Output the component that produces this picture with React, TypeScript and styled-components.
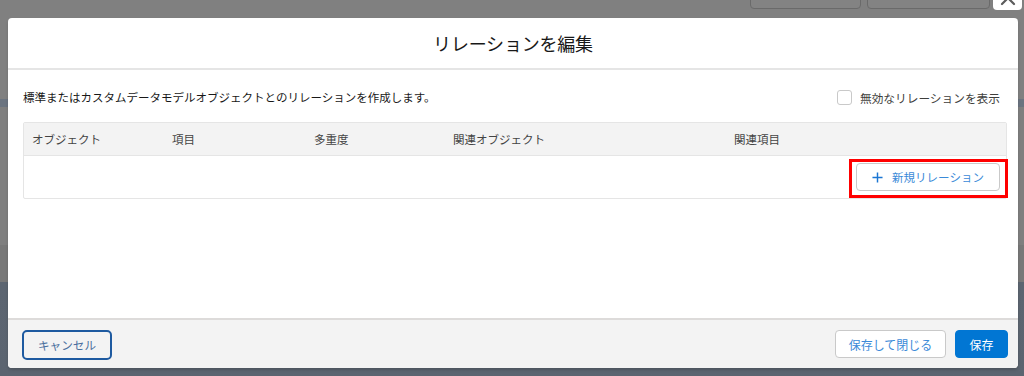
import styled, { createGlobalStyle } from "styled-components";

const GlobalStyle = createGlobalStyle`
  html, body {
    margin: 0;
    padding: 0;
  }
  body {
    font-family: "Noto Sans CJK JP", "Noto Sans", sans-serif;
    color: #181818;
  }
  * {
    box-sizing: border-box;
  }
`;

const Screen = styled.div`
  position: relative;
  width: 1024px;
  height: 376px;
  overflow: hidden;
  background: linear-gradient(
    to bottom,
    #808080 0px,
    #808080 99px,
    #6b7480 99px,
    #6b7480 107px,
    #7f7f7f 107px,
    #7f7f7f 245px,
    #787878 245px,
    #787878 282px,
    #5c6571 282px,
    #5b6470 100%
  );
`;

const BackToolbar = styled.div`
  display: flex;
  justify-content: flex-end;
  gap: 6px;
  padding-right: 34px;
  height: 9px;
`;

const BackButton = styled.div<{ $w: number }>`
  width: ${(p) => p.$w}px;
  height: 30px;
  margin-top: -21px;
  border: 1px solid #6a6a6a;
  border-radius: 4px;
  background: #838383;
`;

const Overlay = styled.div`
  position: absolute;
  inset: 0;
  padding: 18px 6px 8px 8px;
`;

const Modal = styled.div`
  position: relative;
  height: 350px;
  background: #ffffff;
  border-radius: 4px;
  box-shadow: 0 2px 3px rgba(0, 0, 0, 0.16);
  display: flex;
  flex-direction: column;
`;

const CloseButton = styled.button`
  position: absolute;
  top: -46px;
  right: -4px;
  width: 29px;
  height: 38px;
  border: none;
  border-radius: 4px;
  background: #ffffff;
  display: flex;
  align-items: flex-end;
  justify-content: center;
  padding: 0 0 4px;
  color: #5c5c5c;
`;

const Header = styled.div`
  height: 52px;
  border-bottom: 2px solid #e5e5e5;
  border-radius: 4px 4px 0 0;
  display: flex;
  align-items: center;
  justify-content: center;
`;

const Title = styled.h2`
  margin: 0;
  font-size: 18px;
  font-weight: 400;
  color: #181818;
  letter-spacing: -0.2px;
`;

const Body = styled.div`
  flex: 1;
  padding: 17px 11px 0 15px;
  display: flex;
  flex-direction: column;
  gap: 15px;
`;

const TopRow = styled.div`
  height: 20px;
  display: flex;
  align-items: center;
  justify-content: space-between;
  padding-right: 7px;
`;

const Description = styled.p`
  margin: 0;
  font-size: 11.5px;
  color: #181818;
`;

const CheckLabel = styled.label`
  display: flex;
  align-items: center;
  gap: 8px;
  font-size: 11.7px;
  color: #3e3e3c;
`;

const CheckBox = styled.span`
  width: 15px;
  height: 15px;
  border: 1px solid #c9c9c9;
  border-radius: 3px;
  background: #ffffff;
`;

const Table = styled.div`
  border: 1px solid #e5e5e5;
  border-radius: 2px;
`;

const HeadRow = styled.div`
  height: 33px;
  background: #f3f3f3;
  border-bottom: 1px solid #e5e5e5;
  display: grid;
  grid-template-columns: 140px 142px 139px 281px 1fr;
  align-items: center;
  padding-left: 8px;
`;

const HeadCell = styled.div`
  font-size: 11.5px;
  color: #444444;
`;

const ActionRow = styled.div`
  height: 42px;
  display: flex;
  align-items: center;
  justify-content: flex-end;
  padding-right: 6px;
`;

const Highlight = styled.div`
  position: relative;
  &::after {
    content: "";
    position: absolute;
    top: -4px;
    bottom: -7px;
    left: -7px;
    right: -8px;
    border: 3px solid #ff0000;
    pointer-events: none;
  }
`;

const NeutralButton = styled.button<{ $w: number }>`
  width: ${(p) => p.$w}px;
  height: 28px;
  padding: 0;
  border: 1px solid #c9c9c9;
  border-radius: 4px;
  background: #ffffff;
  color: #3b8ad8;
  font-family: inherit;
  font-size: 11.5px;
  white-space: nowrap;
  display: flex;
  align-items: center;
  justify-content: center;
  gap: 9px;
`;

const Footer = styled.div`
  height: 50px;
  border-top: 2px solid #dddbda;
  background: #f3f3f3;
  border-radius: 0 0 4px 4px;
  display: flex;
  align-items: center;
  justify-content: space-between;
  padding: 0 10px 0 14px;
`;

const CancelButton = styled.button`
  width: 90px;
  height: 30px;
  margin-top: 1px;
  border: 2px solid #1e5aa0;
  border-radius: 5px;
  background: #f3f3f3;
  color: #4a6f9e;
  font-family: inherit;
  font-size: 11.6px;
`;

const ButtonGroup = styled.div`
  display: flex;
  align-items: center;
  gap: 9px;
`;

const BrandButton = styled.button`
  height: 28px;
  width: 53px;
  border: 1px solid #0176d3;
  border-radius: 4px;
  background: #0176d3;
  color: #ffffff;
  font-family: inherit;
  font-size: 12px;
`;

const columns = ["オブジェクト", "項目", "多重度", "関連オブジェクト", "関連項目"];

export default function App() {
  return (
    <>
      <GlobalStyle />
      <Screen>
        <BackToolbar>
          <BackButton $w={111} />
          <BackButton $w={123} />
        </BackToolbar>
        <Overlay>
          <Modal>
            <CloseButton aria-label="閉じる">
              <svg width="16" height="16" viewBox="0 0 16 16">
                <path d="M2 2 L14 14 M14 2 L2 14" stroke="currentColor" strokeWidth="2.2" strokeLinecap="round" />
              </svg>
            </CloseButton>
            <Header>
              <Title>リレーションを編集</Title>
            </Header>
            <Body>
              <TopRow>
                <Description>標準またはカスタムデータモデルオブジェクトとのリレーションを作成します。</Description>
                <CheckLabel>
                  <CheckBox />
                  無効なリレーションを表示
                </CheckLabel>
              </TopRow>
              <Table>
                <HeadRow>
                  {columns.map((c) => (
                    <HeadCell key={c}>{c}</HeadCell>
                  ))}
                </HeadRow>
                <ActionRow>
                  <Highlight>
                    <NeutralButton $w={144}>
                      <svg width="11" height="11" viewBox="0 0 12 12">
                        <path d="M6 0.5 V11.5 M0.5 6 H11.5" stroke="#1b76d3" strokeWidth="1.6" />
                      </svg>
                      <span>新規リレーション</span>
                    </NeutralButton>
                  </Highlight>
                </ActionRow>
              </Table>
            </Body>
            <Footer>
              <CancelButton>キャンセル</CancelButton>
              <ButtonGroup>
                <NeutralButton $w={111} style={{ fontSize: 12 }}>
                  保存して閉じる
                </NeutralButton>
                <BrandButton>保存</BrandButton>
              </ButtonGroup>
            </Footer>
          </Modal>
        </Overlay>
      </Screen>
    </>
  );
}
